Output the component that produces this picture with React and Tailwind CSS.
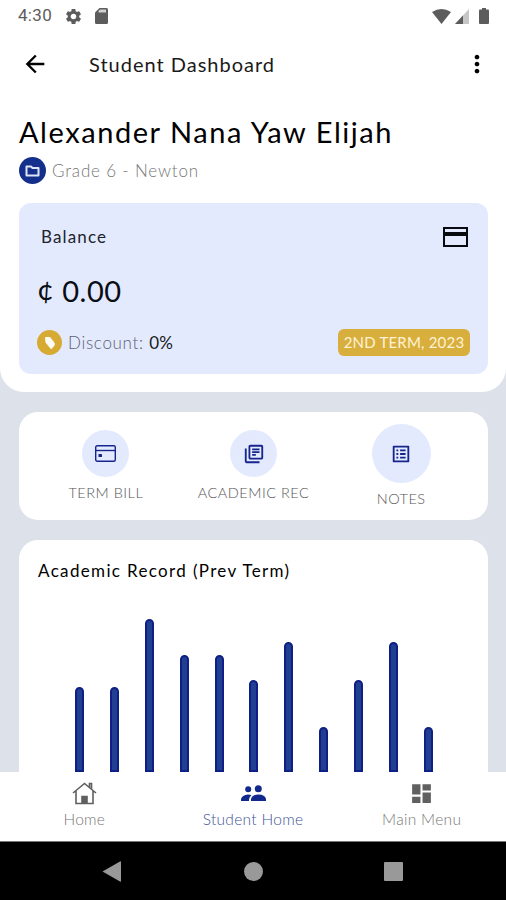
import React from 'react';
import {
  MdArrowBack,
  MdMoreVert,
  MdSettings,
  MdOutlineLibraryBooks,
  MdOutlineListAlt,
  MdDashboard,
} from 'react-icons/md';

const scores = [85, 85, 153, 117, 117, 92, 130, 45, 92, 130, 45];

export default function StudentDashboard() {
  return (
    <div className="flex h-[900px] w-[506px] flex-col overflow-hidden bg-[#dde2ea] font-['Lato',sans-serif] text-black">
      <header className="h-[392px] shrink-0 rounded-b-[24px] bg-white">
        <StatusBar />

        {/* App bar */}
        <div className="flex h-16 items-center pl-[21px] pr-[15px]">
          <MdArrowBack className="h-[28px] w-[28px]" />
          <h1 className="ml-10 flex-1 text-[20px] leading-6 tracking-[1px] text-[#1a1a1a]">Student Dashboard</h1>
          <MdMoreVert className="h-[28px] w-[28px]" />
        </div>

        <div className="pl-[19px] pr-[18px]">
          <h2 className="mt-[18px] whitespace-nowrap text-[29px] leading-9 tracking-[1.55px]">Alexander Nana Yaw Elijah</h2>
          <div className="mt-[7px] flex h-[27px] items-center gap-1.5">
            <span className="flex h-[27px] w-[27px] items-center justify-center rounded-full bg-[#15308c]">
              <FolderIcon />
            </span>
            <span className="text-[17px] font-light tracking-[0.83px] text-[#777]">Grade 6 - Newton</span>
          </div>
          <BalanceCard />
        </div>
      </header>

      <main className="flex min-h-0 flex-1 flex-col gap-5 overflow-hidden pl-[19px] pr-[18px] pt-5">
        {/* Quick actions */}
        <div className="flex h-[108px] shrink-0 rounded-[19px] bg-white px-[13px]">
          <QuickAction label="TERM BILL" className="pt-[18px]" circle="h-[47px] w-[47px]">
            <TermBillIcon />
          </QuickAction>
          <QuickAction label="ACADEMIC REC" className="pt-[18px]" circle="h-[47px] w-[47px]">
            <MdOutlineLibraryBooks className="h-[22px] w-[22px]" />
          </QuickAction>
          <QuickAction label="NOTES" className="pt-3" circle="h-[59px] w-[59px]">
            <MdOutlineListAlt className="h-[22px] w-[22px]" />
          </QuickAction>
        </div>

        {/* Chart */}
        <div className="flex flex-1 flex-col rounded-t-[19px] bg-white">
          <h3 className="pl-[19px] pt-[19px] text-[17px] leading-6 tracking-[1.35px]">Academic Record (Prev Term)</h3>
          <div className="flex flex-1 items-end justify-between pl-14 pr-[55px]">
            {scores.map((score, i) => (
              <div
                key={i}
                className="w-[9px] rounded-t-full border-2 border-[#101f86] bg-[#203f91]"
                style={{ height: score }}
              />
            ))}
          </div>
        </div>
      </main>

      <BottomNav />
      <SystemNav />
    </div>
  );
}

function StatusBar() {
  return (
    <div className="flex h-8 items-center pl-[18px] pr-4 text-[#5c5c5c]">
      <span className="text-[17px] font-['Roboto',sans-serif] tracking-[0.3px]">4:30</span>
      <MdSettings className="ml-3 h-[19px] w-[19px]" />
      <svg className="ml-3 h-4 w-[13px]" viewBox="0 0 13 16" fill="currentColor">
        <path d="M4.5 0H11.5Q13 0 13 1.5V14.5Q13 16 11.5 16H1.5Q0 16 0 14.5V4.5Z" />
        <path d="M5 1.5H11V4.5H3.5V3Z" fill="#d0d0d0" />
      </svg>
      <div className="flex-1" />
      <svg className="h-[15px] w-[19px]" viewBox="0 0 19 15" fill="currentColor">
        <path d="M0 3Q9.5-3 19 3L9.5 15Z" />
      </svg>
      <svg className="ml-1 h-[15px] w-[14px]" viewBox="0 0 14 15" fill="currentColor">
        <path d="M14 0V15H0Z" fill="#c6c6c6" />
        <path d="M8 6.4V15H0Z" />
      </svg>
      <svg className="ml-[10px] mr-px h-4 w-[10px]" viewBox="0 0 10 16" fill="currentColor">
        <path d="M3 0H7V1.5H9Q10 1.5 10 2.5V15Q10 16 9 16H1Q0 16 0 15V2.5Q0 1.5 1 1.5H3Z" />
      </svg>
    </div>
  );
}

function BalanceCard() {
  return (
    <div className="mt-[19px] h-[171px] rounded-[12px] bg-[#e4eafe] px-[18px] pt-5">
      <div className="flex h-7 items-center justify-between pl-1 pr-0.5">
        <span className="text-[17px] tracking-[1.15px] text-[#20232c]">Balance</span>
        <svg className="h-5 w-[25px]" viewBox="0 0 25 20" fill="none" stroke="#080a10" strokeWidth="2">
          <rect x="1" y="1" width="23" height="18" />
          <path d="M1 7H24" strokeWidth="4" />
        </svg>
      </div>
      <p className="mt-[22px] text-[29px] leading-9 tracking-[0.5px] text-[#0b0d14]">
        <span className="inline-block -translate-y-[2px]">¢</span> 0.00
      </p>
      <div className="mt-5 flex h-[27px] items-center">
        <span className="flex h-[25px] w-[25px] items-center justify-center rounded-full bg-[#d7aa34]">
          <svg className="h-[14px] w-[12px]" viewBox="0 0 12 14" fill="#fffdf5">
            <path d="M1 2Q1 1 2 1L6 1L10 6Q11.5 8 10.5 9.5L8 12.5Q7 13.5 6 12L1.5 6.5Z" />
          </svg>
        </span>
        <span className="ml-1.5 text-[17px] font-light tracking-[0.7px] text-[#5c6070]">
          Discount: <span className="font-normal tracking-[0.3px] text-[#151820]">0%</span>
        </span>
        <span className="ml-auto flex h-[27px] w-[132px] items-center justify-center whitespace-nowrap rounded-[6px] bg-[#d8ae3c] text-[15px] tracking-[0.2px] text-[#fff3d6]">
          2ND TERM, 2023
        </span>
      </div>
    </div>
  );
}

function QuickAction({ label, className, circle, children }) {
  return (
    <div className={`flex flex-1 flex-col items-center ${className}`}>
      <span className={`flex items-center justify-center rounded-full bg-[#e4eafe] text-[#15258c] ${circle}`}>{children}</span>
      <span className="mt-1.5 whitespace-nowrap text-[14.5px] font-light leading-5 tracking-[0.5px] text-[#555]">{label}</span>
    </div>
  );
}

function BottomNav() {
  return (
    <nav className="flex h-[70px] shrink-0 border-b border-[#777] bg-white">
      <NavItem label="Home" color="text-[#777]">
        <svg className="h-[23px] w-[25px]" viewBox="0 0 25 23" fill="none" stroke="#606060" strokeWidth="1.6">
          <path d="M1 11L12.5 1.5L24 11M4 9V21.5H21V9M17.5 5V1.5H19.5V7" />
          <path d="M10 21V14.500H15V21Z" fill="#606060" />
        </svg>
      </NavItem>
      <NavItem label="Student Home" color="text-[#40549a]">
        <svg className="h-[17px] w-[25px]" viewBox="0 0 25 17" fill="#10298a">
          <circle cx="7.2" cy="4.2" r="3" />
          <circle cx="17.3" cy="3.8" r="3.5" />
          <path d="M0 16V14Q1 10 7 9.5Q9 9.5 10.5 10.2Q8.2 12 8 14.5V16Z" />
          <path d="M10 16V14Q11 9.5 17.5 9.5T25 14V16Z" />
        </svg>
      </NavItem>
      <NavItem label="Main Menu" color="text-[#777]">
        <MdDashboard className="h-[25px] w-[25px] text-[#606060]" />
      </NavItem>
    </nav>
  );
}

function NavItem({ label, color, children }) {
  return (
    <div className="flex flex-1 flex-col items-center pt-[9px]">
      <span className="flex h-[25px] items-center">{children}</span>
      <span className={`mt-[3px] text-[15.5px] font-light leading-5 tracking-[0.3px] ${color}`}>{label}</span>
    </div>
  );
}

function SystemNav() {
  return (
    <div className="flex h-[58px] shrink-0 items-center bg-black pl-[102px]">
      <svg className="h-[21px] w-[19px]" viewBox="0 0 19 21" fill="#999">
        <path d="M0.5 10.5L18 0.5Q19 0 19 1V20Q19 21 18 20.5Z" />
      </svg>
      <span className="ml-[123px] h-[19px] w-[19px] rounded-full bg-[#999]" />
      <span className="ml-[121px] h-[19px] w-[19px] rounded-[1px] bg-[#999]" />
    </div>
  );
}

function FolderIcon() {
  return (
    <svg className="h-3 w-[15px]" viewBox="0 0 15 12" fill="none" stroke="#dfe5f7" strokeWidth="2">
      <path d="M1.5 10.5V1.5H6L7.5 3H13.5V10.5Z" strokeLinejoin="round" />
    </svg>
  );
}

function TermBillIcon() {
  return (
    <svg className="h-[17px] w-[21px]" viewBox="0 0 21 17" fill="none" stroke="currentColor" strokeWidth="1.4">
      <rect x="0.7" y="0.7" width="19.6" height="15.6" rx="1.5" />
      <path d="M1 5.5H20" />
      <rect x="3.5" y="9" width="3.5" height="3" rx="0.5" fill="currentColor" stroke="none" />
    </svg>
  );
}
